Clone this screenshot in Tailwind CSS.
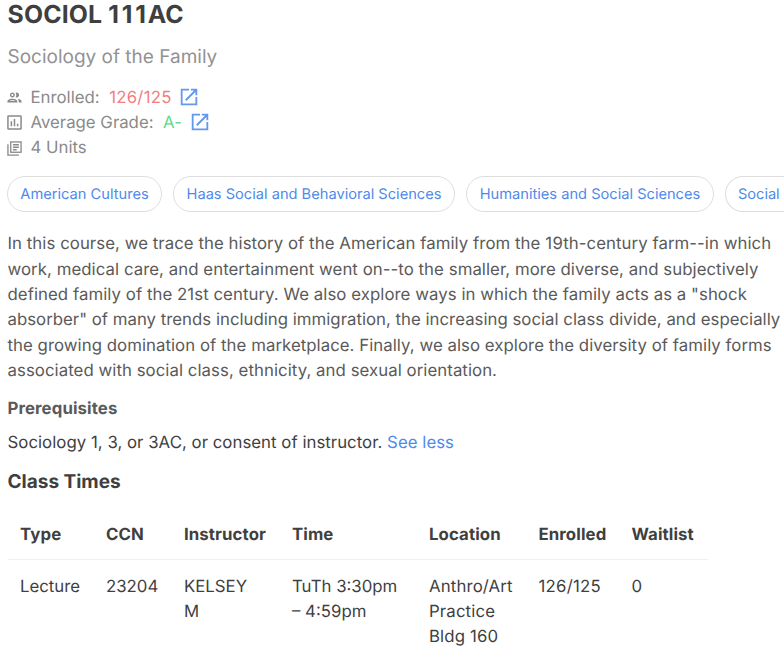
<!DOCTYPE html>
<html lang="en"><head><meta charset="utf-8"><title>SOCIOL 111AC</title>
<script src="https://cdn.jsdelivr.net/npm/@tailwindcss/browser@4"></script></head>
<body class="w-[784px] h-[651px] overflow-hidden bg-white font-['Inter',sans-serif] [text-rendering:geometricPrecision] text-[#3f3f3f]">
<main class="pl-[7.5px] text-[16.8px] leading-[25.3px]">
<h1 class="text-[24.8px] font-bold leading-[29px] whitespace-nowrap tracking-[.15px]">SOCIOL <span class="tracking-[2.8px]">11</span><span class="tracking-[1.800px]">1</span>AC</h1>
<h2 class="mt-[14px] text-[19px] leading-[28px] text-[#929292]">Sociology of the Family</h2>
<div class="mt-[14px] text-[#8a8a8a]">
<div class="flex items-center h-[25.3px]"><svg class="w-[17px] h-[17px] -ml-[1.5px] mr-[7.5px]" viewBox="0 0 24 24" fill="currentColor"><path d="M9 13.750c-2.340 0-7 1.170-7 3.500V19h14v-1.750c0-2.330-4.660-3.500-7-3.500zM4.340 17c.84-.58 2.870-1.250 4.660-1.250s3.820.67 4.660 1.250H4.340zM9 12c1.930 0 3.500-1.570 3.500-3.500S10.930 5 9 5 5.500 6.570 5.500 8.500 7.070 12 9 12zm0-5c.83 0 1.500.67 1.500 1.500S9.830 10 9 10s-1.500-.67-1.500-1.500S8.170 7 9 7zm7.040 6.810c1.160.84 1.960 1.960 1.960 3.440V19h4v-1.750c0-2.020-3.500-3.170-5.960-3.440zM15 12c1.930 0 3.500-1.570 3.500-3.500S16.930 5 15 5c-.54 0-1.040.13-1.500.35.63.89 1 1.980 1 3.150s-.37 2.260-1 3.150c.46.22.96.35 1.500.35z"/></svg><span class="pt-[1.5px]">Enrolled:</span><span class="pt-[1.5px] ml-[9.5px] tracking-[.25px] text-[#f08080]">126/125</span><svg class="ml-[6.5px] mb-[1px] w-[22px] h-[22px] text-[#6598ec]" viewBox="0 0 24 24" fill="currentColor"><path d="M19 19H5V5h7V3H3v18h18v-9h-2v7zM14 3v2h3.590l-9.830 9.830 1.410 1.410L19 6.410V10h2V3h-7z"/></svg></div>
<div class="flex items-center h-[25.3px]"><svg class="w-[15px] h-[15px] -ml-[.5px] mr-[8.5px]" viewBox="0 0 24 24" fill="none" stroke="currentColor" stroke-width="2.400"><rect x="1.500" y="1.500" width="21" height="21" rx="1"/><path d="M7 10v8M12 6.500v11.500M17 14v4"/></svg><span class="pt-[1.5px]">Average Grade:</span><span class="pt-[1.5px] ml-[9.5px] tracking-[.3px] text-[#5fd98a]">A-</span><svg class="ml-[6.5px] mb-[1px] w-[22px] h-[22px] text-[#6598ec]" viewBox="0 0 24 24" fill="currentColor"><path d="M19 19H5V5h7V3H3v18h18v-9h-2v7zM14 3v2h3.590l-9.830 9.830 1.410 1.410L19 6.410V10h2V3h-7z"/></svg></div>
<div class="flex items-center h-[25.3px]"><svg class="w-[15px] h-[15px] -ml-[.5px] mr-[8.5px]" viewBox="0 0 24 24" fill="none" stroke="currentColor" stroke-width="2.100"><rect x="6" y="1.500" width="16.500" height="16.500"/><path d="M1.500 5v17.500H19M9.500 6h9.500M9.500 10h9.500M9.500 14h6"/></svg><span class="pt-[1px]">4 Units</span></div>
</div>
<div class="-ml-[.5px] mt-[15px] flex gap-[11px] text-[14.65px] text-[#4f8aeb] whitespace-nowrap">
<span class="shrink-0 w-[155px] h-[36px] pt-[1px] rounded-full border border-[#dedede] flex items-center justify-center">American Cultures</span>
<span class="shrink-0 w-[282px] h-[36px] pt-[1px] rounded-full border border-[#dedede] flex items-center justify-center">Haas Social and Behavioral Sciences</span>
<span class="shrink-0 w-[248px] h-[36px] pt-[1px] rounded-full border border-[#dedede] flex items-center justify-center">Humanities and Social Sciences</span>
<span class="w-[60px] shrink-0 h-[36px] pt-[1px] rounded-l-full border border-r-0 border-[#dedede] flex items-center pl-[12px] tracking-[-.05px]">Social</span>
</div>
<p class="mt-[20.6px] whitespace-nowrap text-[#5a5a5a] tracking-[.055px]">In this course, we trace the history of the American family from the <span class="tracking-[.4px]">19</span>th-century farm--in which<br>work, medical care, and entertainment went on--to the smaller, more diverse, and subjectively<br>defined family of the 21st century. We also explore ways in which the family acts as a "shock<br><span class="tracking-[.01px]">absorber" of many trends including immigration, the increasing social class divide, and especially</span><br><span class="tracking-[.045px]">the growing domination of the marketplace. Finally, we also explore the diversity of family forms</span><br>associated with social class, ethnicity, and sexual orientation.</p>
<h3 class="mt-[12.4px] text-[16.8px] font-bold text-[#5a5a5a] tracking-[.1px]">Prerequisites</h3>
<p class="mt-[8.6px] tracking-[.03px]">Sociology 1, 3, or 3AC, or consent of instructor. <a class="text-[#4f8aeb]">See less</a></p>
<h3 class="mt-[13.4px] text-[19px] font-bold">Class Times</h3>
<table class="mt-[15px] w-[700px] table-fixed text-left align-top">
<colgroup><col class="w-[86px]"><col class="w-[78px]"><col class="w-[108px]"><col class="w-[137px]"><col class="w-[109.5px]"><col class="w-[93px]"><col></colgroup>
<thead><tr class="h-[50px] border-b border-[#f0f0f0] [&>th]:pl-[12.5px] [&>th]:pt-[3px] [&>th]:font-bold [&>th]:whitespace-nowrap [&>th]:tracking-[.1px]"><th>Type</th><th>CCN</th><th>Instructor</th><th>Time</th><th>Location</th><th>Enrolled</th><th>Waitlist</th></tr></thead>
<tbody><tr class="align-top [&>td]:pl-[12.5px] [&>td]:pt-[14.6px] [&>td]:whitespace-nowrap"><td>Lecture</td><td>23204</td><td>KELSEY<br>M</td><td>TuTh 3:30pm<br>– 4:59pm</td><td class="tracking-[.14px]">Anthro/Art<br>Practice<br>Bldg 160</td><td class="tracking-[.25px]">126/125</td><td>0</td></tr></tbody>
</table>
</main></body></html>
